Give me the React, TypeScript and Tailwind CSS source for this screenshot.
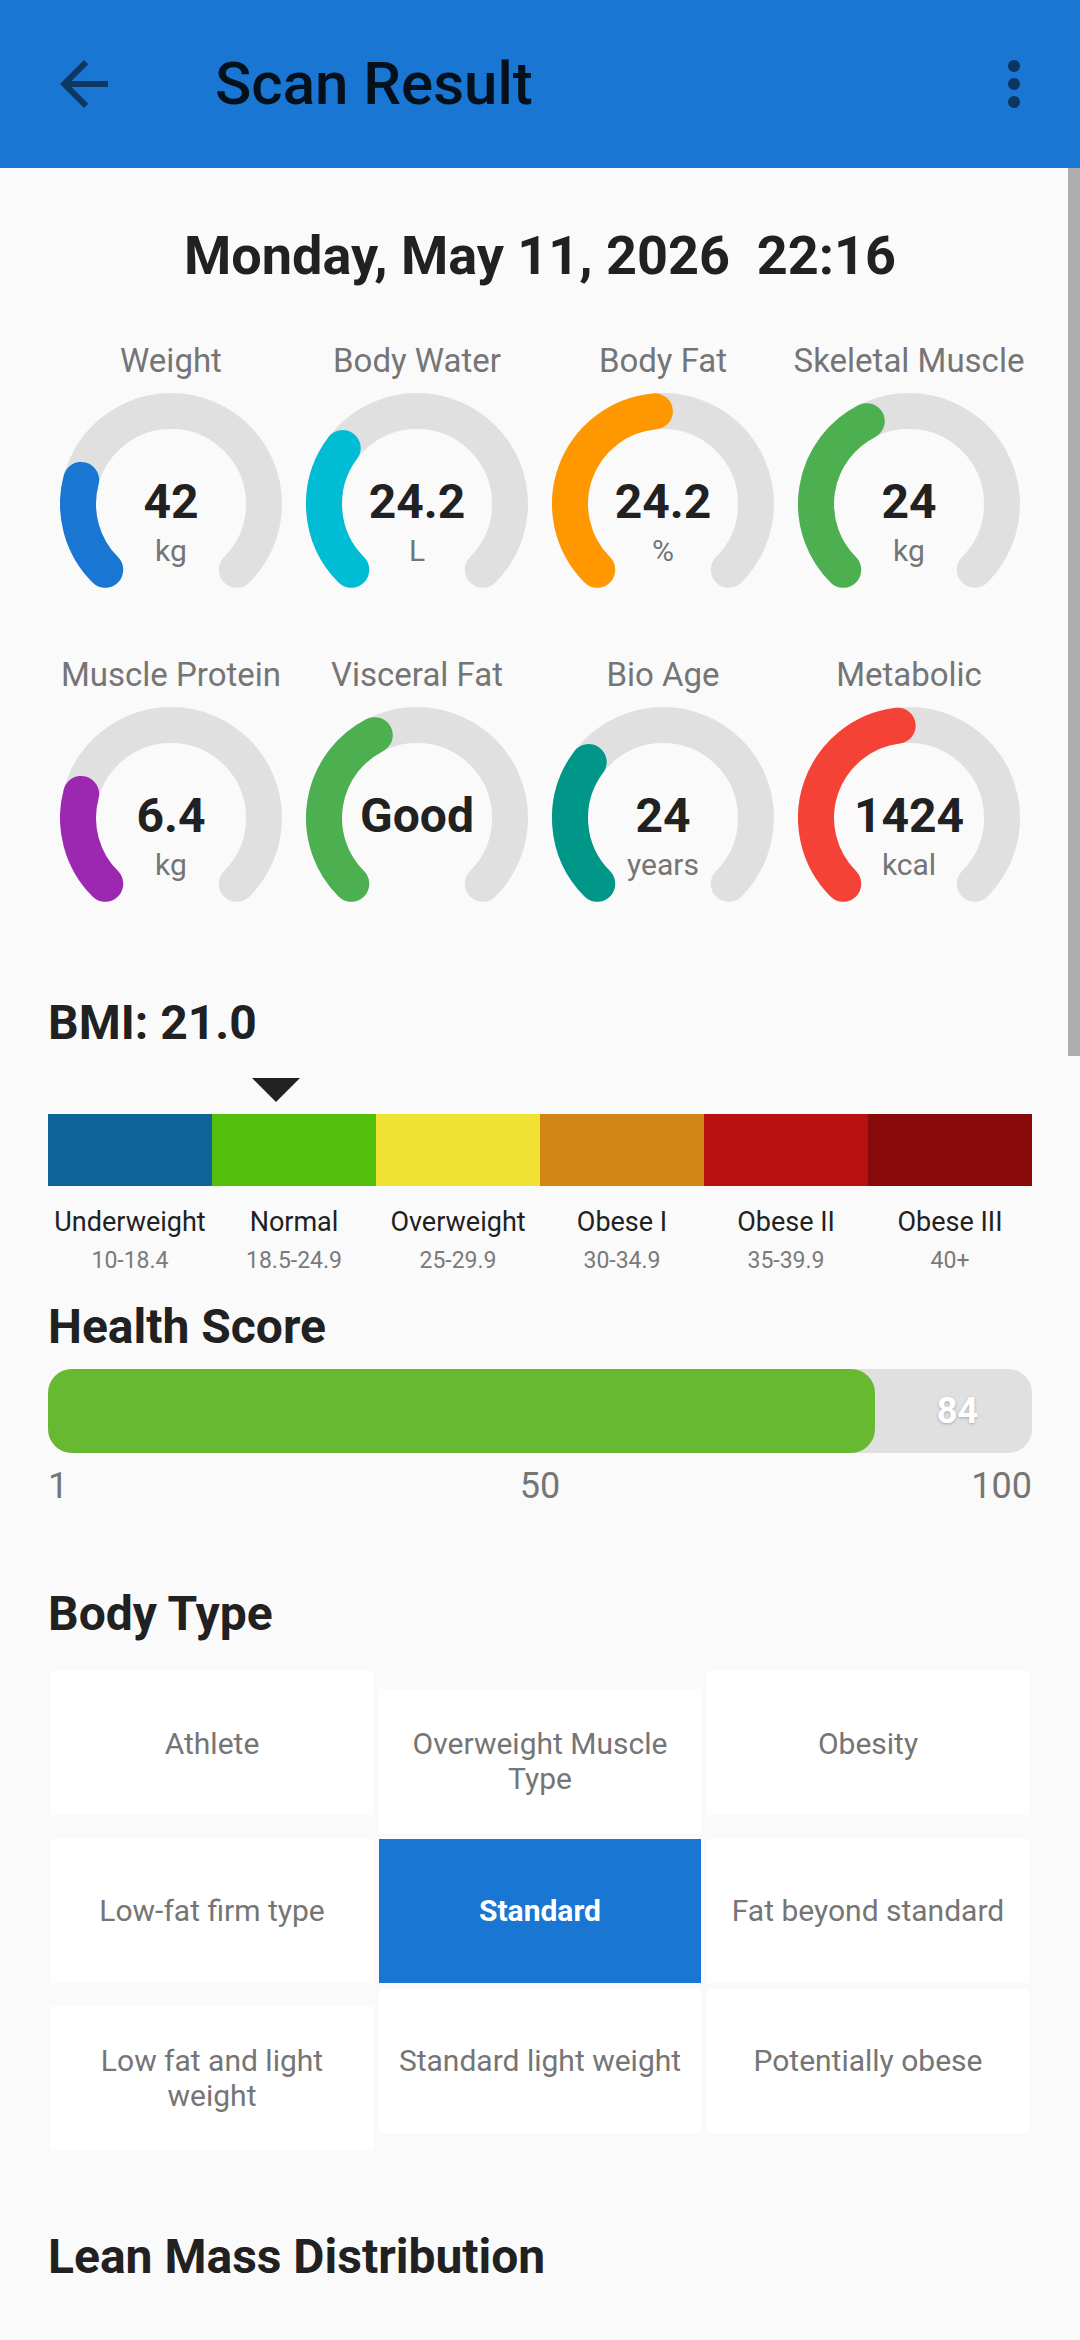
const R = 93;
const C = 111;

function point(deg: number) {
  const a = (deg * Math.PI) / 180;
  return [C + R * Math.cos(a), C + R * Math.sin(a)];
}

function arcPath(sweep: number) {
  const [x1, y1] = point(135);
  const [x2, y2] = point(135 + sweep);
  return `M ${x1} ${y1} A ${R} ${R} 0 ${sweep > 180 ? 1 : 0} 1 ${x2} ${y2}`;
}

interface GaugeProps {
  label: string;
  value: string;
  unit?: string;
  color: string;
  sweep: number;
}

const Gauge = ({ label, value, unit, color, sweep }: GaugeProps) => {
  return (
    <div className="flex flex-col items-center">
      <div className="h-[40px] text-[33px] leading-[40px] text-[#757575] whitespace-nowrap">{label}</div>
      <div className="relative mt-[12px] w-[222px] h-[222px]">
        <svg width="222" height="222" viewBox="0 0 222 222">
          <path d={arcPath(270)} fill="none" stroke="#e0e0e0" strokeWidth="36" strokeLinecap="round" />
          <path d={arcPath(sweep)} fill="none" stroke={color} strokeWidth="36" strokeLinecap="round" />
        </svg>
        <div className="absolute inset-x-0 top-[81px] flex flex-col items-center">
          <div className="text-[48px] leading-[56px] font-bold text-[#212121]">{value}</div>
          <div className="mt-[3px] text-[30px] leading-[36px] text-[#757575]">{unit}</div>
        </div>
      </div>
    </div>
  );
};

const gaugesTop = [
  { label: "Weight", value: "42", unit: "kg", color: "#1976D2", sweep: 60 },
  { label: "Body Water", value: "24.2", unit: "L", color: "#00BCD4", sweep: 82 },
  { label: "Body Fat", value: "24.2", unit: "%", color: "#FF9800", sweep: 130 },
  { label: "Skeletal Muscle", value: "24", unit: "kg", color: "#4CAF50", sweep: 108 },
];

const gaugesBottom = [
  { label: "Muscle Protein", value: "6.4", unit: "kg", color: "#9C27B0", sweep: 60 },
  { label: "Visceral Fat", value: "Good", unit: "", color: "#4CAF50", sweep: 108 },
  { label: "Bio Age", value: "24", unit: "years", color: "#009688", sweep: 82 },
  { label: "Metabolic", value: "1424", unit: "kcal", color: "#F44336", sweep: 128 },
];

const bmiRanges = [
  { name: "Underweight", range: "10-18.4", color: "bg-[#0e6399]" },
  { name: "Normal", range: "18.5-24.9", color: "bg-[#52bf0a]" },
  { name: "Overweight", range: "25-29.9", color: "bg-[#efe232]" },
  { name: "Obese I", range: "30-34.9", color: "bg-[#cf8615]" },
  { name: "Obese II", range: "35-39.9", color: "bg-[#b80f0f]" },
  { name: "Obese III", range: "40+", color: "bg-[#870909]" },
];

const bodyTypes = [
  ["Athlete", "Overweight Muscle Type", "Obesity"],
  ["Low-fat firm type", "Standard", "Fat beyond standard"],
  ["Low fat and light weight", "Standard light weight", "Potentially obese"],
];

export default function App() {
  return (
    <div className="relative w-[1080px] h-[2340px] overflow-hidden bg-[#fafafa] font-[Roboto,sans-serif]">
      {/* toolbar */}
      <div className="h-[168px] bg-[#1976D2] flex items-center pl-[48px] pr-[30px]">
        <svg width="72" height="72" viewBox="0 0 24 24" fill="#0d3862">
          <path d="M20 11H7.83l5.59-5.59L12 4l-8 8 8 8 1.41-1.41L7.83 13H20v-2z" />
        </svg>
        <div className="ml-[95px] text-[60px] leading-[72px] font-medium text-[#04101c]">Scan Result</div>
        <svg className="ml-auto" width="72" height="72" viewBox="0 0 24 24" fill="#0e3460">
          <circle cx="12" cy="6" r="2" />
          <circle cx="12" cy="12" r="2" />
          <circle cx="12" cy="18" r="2" />
        </svg>
      </div>

      <div className="px-[48px]">
        <div className="mt-[56px] text-center text-[54px] leading-[64px] font-bold text-[#212121] whitespace-pre">
          Monday, May 11, 2026  22:16
        </div>

        <div className="mt-[53px] grid grid-cols-4">
          {gaugesTop.map((g) => (
            <Gauge key={g.label} {...g} />
          ))}
        </div>
        <div className="mt-[40px] grid grid-cols-4">
          {gaugesBottom.map((g) => (
            <Gauge key={g.label} {...g} />
          ))}
        </div>

        {/* BMI */}
        <div className="mt-[66px] text-[48px] leading-[56px] font-bold text-[#212121]">BMI: 21.0</div>
        <svg className="mt-[27px] ml-[204px]" width="48" height="24" viewBox="0 0 48 24">
          <polygon points="0,0 48,0 24,24" fill="#212121" />
        </svg>
        <div className="mt-[12px] flex h-[72px]">
          {bmiRanges.map((b) => (
            <div key={b.name} className={`flex-1 ${b.color}`} />
          ))}
        </div>
        <div className="flex">
          {bmiRanges.map((b) => (
            <div key={b.name} className="flex-1 flex flex-col items-center">
              <div className="mt-[20px] text-[27px] leading-[32px] text-[#212121]">{b.name}</div>
              <div className="mt-[8px] text-[23px] leading-[30px] text-[#7a7a7a]">{b.range}</div>
            </div>
          ))}
        </div>

        {/* Health score */}
        <div className="mt-[23px] text-[48px] leading-[56px] font-bold text-[#212121]">Health Score</div>
        <div className="mt-[14px] flex h-[84px] rounded-[24px] bg-[#e0e0e0]">
          <div className="w-[827px] rounded-[24px] bg-[#68b932]" />
          <div className="flex-1 flex items-center justify-center pl-[8px] text-[36px] font-bold text-white [text-shadow:0_1px_3px_rgba(0,0,0,0.25)]">
            84
          </div>
        </div>
        <div className="mt-[13px] grid grid-cols-3 text-[36px] leading-[40px] text-[#757575]">
          <div className="text-left">1</div>
          <div className="text-center">50</div>
          <div className="text-right">100</div>
        </div>

        {/* Body type */}
        <div className="mt-[80px] text-[48px] leading-[56px] font-bold text-[#212121]">Body Type</div>
        <div className="mt-[26px] flex flex-col">
          {bodyTypes.map((row, i) => (
            <div key={i} className="flex items-baseline">
              {row.map((t) => {
                const active = t === "Standard";
                return (
                  <div
                    key={t}
                    className={`m-[3px] w-[322px] h-[144px] px-[8px] flex items-center justify-center text-center ${
                      active ? "bg-[#1976D2]" : "bg-white"
                    }`}
                  >
                    <span
                      className={`text-[30px] leading-[35px] ${
                        active ? "font-bold text-white" : "text-[#757575]"
                      }`}
                    >
                      {t}
                    </span>
                  </div>
                );
              })}
            </div>
          ))}
        </div>

        <div className="mt-[76px] text-[48px] leading-[56px] font-bold text-[#212121]">Lean Mass Distribution</div>
      </div>

      {/* scrollbar */}
      <div className="absolute right-0 top-[168px] w-[12px] h-[888px] bg-[#adadad]" />
    </div>
  );
}
